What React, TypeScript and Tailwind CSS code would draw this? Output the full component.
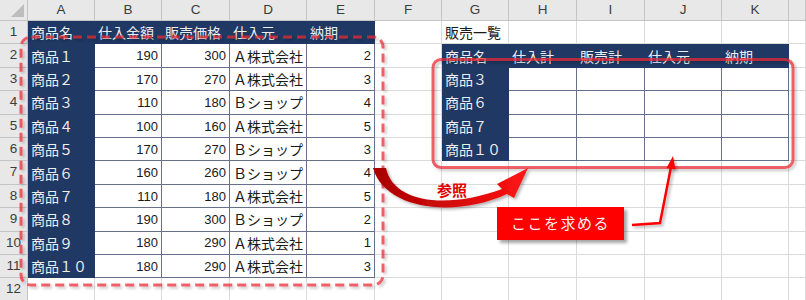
import React from 'react'

const COLS = ['A', 'B', 'C', 'D', 'E', 'F', 'G', 'H', 'I', 'J', 'K', '']

const leftRows = [
  ['商品１', '190', '300', 'Ａ株式会社', '2'],
  ['商品２', '170', '270', 'Ａ株式会社', '3'],
  ['商品３', '110', '180', 'Ｂショップ', '4'],
  ['商品４', '100', '160', 'Ａ株式会社', '5'],
  ['商品５', '170', '270', 'Ｂショップ', '3'],
  ['商品６', '160', '260', 'Ｂショップ', '4'],
  ['商品７', '110', '180', 'Ａ株式会社', '5'],
  ['商品８', '190', '300', 'Ｂショップ', '2'],
  ['商品９', '180', '290', 'Ａ株式会社', '1'],
  ['商品１０', '180', '290', 'Ａ株式会社', '3'],
]
const leftHead = ['商品名', '仕入金額', '販売価格', '仕入元', '納期']
const rightHead = ['商品名', '仕入計', '販売計', '仕入元', '納期']
const rightNames = ['商品３', '商品６', '商品７', '商品１０']

type Cell = { text?: string; kind?: 'navy' | 'data'; num?: boolean }

function cellAt(r: number, c: number): Cell {
  if (r === 1 && c <= 4) return { text: leftHead[c], kind: 'navy' }
  if (r >= 2 && r <= 11 && c <= 4) {
    const row = leftRows[r - 2]
    if (c === 0) return { text: row[0], kind: 'navy' }
    return { text: row[c], kind: 'data', num: c !== 3 }
  }
  if (r === 1 && c === 6) return { text: '販売一覧' }
  if (r === 2 && c >= 6 && c <= 10) return { text: rightHead[c - 6], kind: 'navy' }
  if (r >= 3 && r <= 6 && c === 6) return { text: rightNames[r - 3], kind: 'navy' }
  if (r >= 3 && r <= 6 && c >= 7 && c <= 10) return { kind: 'data' }
  return {}
}

function SheetCell({ cell }: { cell: Cell }) {
  let cls = 'flex items-center overflow-hidden whitespace-nowrap border-r border-b px-[3px] pt-px '
  if (cell.kind === 'navy') cls += 'bg-[#1f3864] border-[#1f3864] text-[#eeeeee] '
  else if (cell.kind === 'data') cls += 'bg-white border-[#66708a] text-[#1a1a1a] '
  else cls += 'border-[#dadada] text-[#1a1a1a] '
  if (cell.num) cls += "justify-end font-['Liberation_Sans',sans-serif] text-[13px]"
  else cls += "font-['Noto_Sans_CJK_JP',sans-serif] text-[14px]"
  return <div className={cls}>{cell.text}</div>
}

export default function App() {
  const rows = Array.from({ length: 12 }, (_, i) => i + 1)
  return (
    <div className="relative h-[300px] w-[806px] overflow-hidden bg-white">
      <div className="grid grid-cols-[28px_67px_67px_68px_77px_68px_67px_67px_68px_68px_77px_67px_1fr] grid-rows-[21px_repeat(12,23.4px)]">
        {/* corner */}
        <div className="relative border-r border-b border-[#c4c4c4] bg-[#e8e8e8]">
          <svg className="absolute right-[3px] bottom-[3px]" width="13" height="13">
            <polygon points="13,0 13,13 0,13" fill="#bdbdbd" />
          </svg>
        </div>
        {COLS.map((l, i) => (
          <div
            key={i}
            className="flex items-center justify-center border-r border-b border-[#c4c4c4] bg-[#e8e8e8] font-['Liberation_Sans',sans-serif] text-[13.5px] text-[#3c3c3c]"
          >
            {l}
          </div>
        ))}
        {rows.map((r) => (
          <React.Fragment key={r}>
            <div className="flex items-center justify-center border-r border-b border-[#c4c4c4] bg-[#e8e8e8] font-['Liberation_Sans',sans-serif] text-[13.5px] text-[#3c3c3c]">
              {r}
            </div>
            {COLS.map((_, c) => (
              <SheetCell key={c} cell={cellAt(r, c)} />
            ))}
          </React.Fragment>
        ))}
      </div>

      <svg className="pointer-events-none absolute left-0 top-0" width={806} height={300} viewBox="0 0 806 300">
        <defs>
          <filter id="sh" x="-10%" y="-10%" width="130%" height="130%">
            <feDropShadow dx="2" dy="2" stdDeviation="1.5" floodColor="#000" floodOpacity="0.3" />
          </filter>
          <linearGradient id="arc" x1="373" y1="0" x2="528" y2="0" gradientUnits="userSpaceOnUse">
            <stop offset="0" stopColor="#a80000" />
            <stop offset="1" stopColor="#ff1414" />
          </linearGradient>
        </defs>
        <rect x="21" y="37" width="362" height="248" rx="10" fill="none" stroke="rgba(236,40,52,0.72)" strokeWidth="3" strokeDasharray="9 5" filter="url(#sh)" />
        <rect x="433" y="59.5" width="360" height="108" rx="8" fill="none" stroke="rgba(236,40,52,0.72)" strokeWidth="3" filter="url(#sh)" />
        <path
          d="M373 168 L386 168 C393 202 445 210 502 189 L497 184 L528 168 L514 198 L507 194 C455 218 385 210 373 168 Z"
          fill="url(#arc)"
          filter="url(#sh)"
        />
        <g filter="url(#sh)">
          <polyline points="632,225 660,223 671,167" fill="none" stroke="#ff0000" strokeWidth="2.5" />
          <polygon points="673,156 666.5,168 675.5,169.5" fill="#ff0000" />
        </g>
      </svg>

      <div className="absolute left-[437px] top-[182px] font-['Noto_Sans_CJK_JP',sans-serif] text-[15px] leading-none font-bold text-[#e00000]">
        参照
      </div>
      <div className="absolute left-[497px] top-[207px] flex h-[33px] w-[127px] items-center justify-center bg-[#ff0000] font-['Noto_Sans_CJK_JP',sans-serif] text-[15px] tracking-[1.5px] text-[#fff0f0] shadow-[3px_3px_3px_rgba(0,0,0,0.35)]">
        ここを求める
      </div>
    </div>
  )
}
